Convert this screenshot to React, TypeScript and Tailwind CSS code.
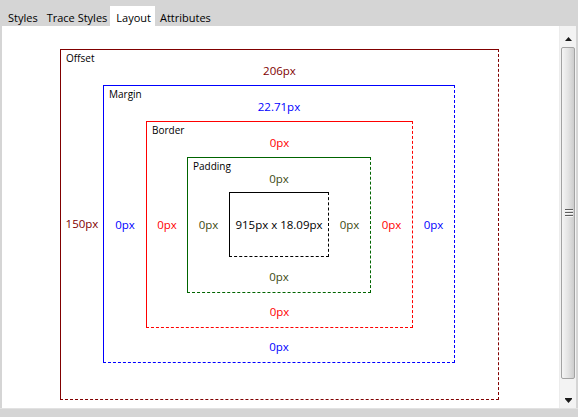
import type { ReactNode } from 'react';

type BoxProps = {
  label: string;
  frame: string;
  text: string;
  top?: string;
  left?: string;
  right?: string;
  bottom?: string;
  children: ReactNode;
};

const Box = ({ label, frame, text, top, left, right, bottom, children }: BoxProps) => (
  <div className={`relative grid border [border-right-style:dashed] [border-bottom-style:dashed] ${frame}`}>
    <span className="absolute top-[2px] left-[5px] text-[10px] leading-[12px] text-black">{label}</span>
    <div className={`col-span-3 flex items-center justify-center pt-[7px] ${text}`}>{top}</div>
    <div className={`flex items-center justify-center ${text}`}>{left}</div>
    <div>{children}</div>
    <div className={`flex items-center justify-center ${text}`}>{right}</div>
    <div className={`col-span-3 flex items-center justify-center pt-[4px] ${text}`}>{bottom}</div>
  </div>
);

const Scrollbar = () => (
  <div className="w-[17px] flex flex-col bg-[#f3f3f3] border-l border-[#ececec]">
    <div className="h-[21px] flex items-end justify-center pb-[6px]">
      <svg width="7" height="4" viewBox="0 0 7 4">
        <polygon points="0,4 3.5,0 7,4" fill="#1a1a1a" />
      </svg>
    </div>
    <div className="flex-1 ml-[1px] mr-[1px] rounded-[2px] border border-[#a3a3a3] bg-gradient-to-r from-[#f5f5f5] via-[#e4e4e4] to-[#cdcdcd] flex items-center justify-center">
      <svg width="9" height="9" viewBox="0 0 9 9">
        <rect x="1" y="0" width="8" height="1" fill="#5e5e5e" />
        <rect x="1" y="1" width="8" height="1" fill="#f8f8f8" />
        <rect x="1" y="3" width="8" height="1" fill="#5e5e5e" />
        <rect x="1" y="4" width="8" height="1" fill="#f8f8f8" />
        <rect x="1" y="6" width="8" height="1" fill="#5e5e5e" />
        <rect x="1" y="7" width="8" height="1" fill="#f8f8f8" />
      </svg>
    </div>
    <div className="h-[29px] flex items-end justify-center pb-[5px]">
      <svg width="7" height="5" viewBox="0 0 7 5">
        <rect x="0" y="0" width="7" height="1" fill="#1a1a1a" />
        <polygon points="0,1 7,1 3.5,5" fill="#1a1a1a" />
      </svg>
    </div>
  </div>
);

const tabs = ['Styles', 'Trace Styles', 'Layout', 'Attributes'];

export default function App() {
  return (
    <div className="w-[578px] h-[417px] flex flex-col overflow-hidden bg-[#d5d5d5] font-['Open_Sans',sans-serif] text-black">
      <div className="h-[26px] flex items-end gap-[1px] pl-[4px] text-[11px]">
        {tabs.map((t) =>
          t === 'Layout' ? (
            <div key={t} className="h-[20px] pl-[6px] pr-[4px] -ml-[2px] bg-white leading-[20px] pt-[2px]">
              {t}
            </div>
          ) : (
            <div key={t} className="h-[20px] px-[4px] leading-[20px] pt-[2px]">
              {t}
            </div>
          )
        )}
      </div>

      <div className="h-[382px] flex pl-[2px] pr-[2px]">
        <div className="flex-1 bg-white pl-[58px] pt-[23px] text-[11.5px]">
          <div className="inline-block">
            <Box
              label="Offset"
              frame="border-[#800000] grid-cols-[42px_auto_43px] grid-rows-[35px_auto_36px]"
              text="text-[#800000]"
              top="206px"
              left="150px"
            >
              <Box
                label="Margin"
                frame="border-[#0000ff] grid-cols-[42px_auto_41px] grid-rows-[35px_auto_34px]"
                text="text-[#0000ff]"
                top="22.71px"
                left="0px"
                right="0px"
                bottom="0px"
              >
                <Box
                  label="Border"
                  frame="border-[#ff0000] grid-cols-[40px_auto_41px] grid-rows-[35px_auto_34px]"
                  text="text-[#ff0000]"
                  top="0px"
                  left="0px"
                  right="0px"
                  bottom="0px"
                >
                  <Box
                    label="Padding"
                    frame="border-[#006400] grid-cols-[41px_auto_41px] grid-rows-[34px_auto_35px]"
                    text="text-[#3d4a12]"
                    top="0px"
                    left="0px"
                    right="0px"
                    bottom="0px"
                  >
                    <div className="w-[100px] h-[65px] border border-black [border-right-style:dashed] [border-bottom-style:dashed] flex items-center justify-center">
                      915px x 18.09px
                    </div>
                  </Box>
                </Box>
              </Box>
            </Box>
          </div>
        </div>
        <Scrollbar />
      </div>

      <div className="flex-1 border-t border-[#e2e2e2]" />
    </div>
  );
}
